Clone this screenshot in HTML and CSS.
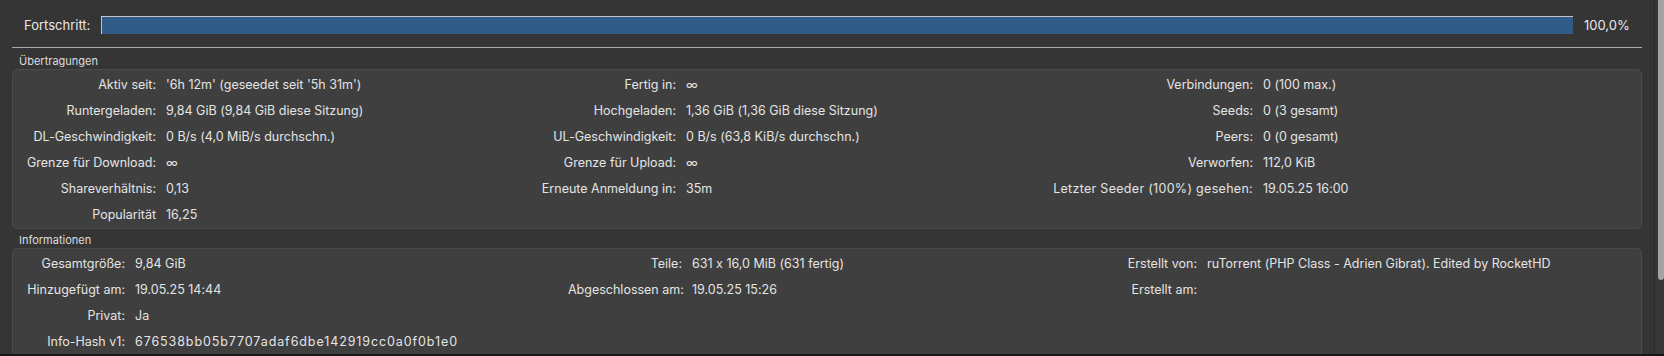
FILE: index.html
```html
<!DOCTYPE html>
<html lang="de">
<head>
<meta charset="utf-8">
<title>Torrent-Info</title>
<link rel="stylesheet" href="styles.css">
</head>
<body>
<div class="window">
  <main class="content">
    <div class="progress-row">
      <span class="plabel">Fortschritt:</span>
      <div class="bar"><div class="fill" style="width:100%"></div></div>
      <span class="pct">100,0%</span>
    </div>
    <div class="sep"></div>

    <section class="group">
      <div class="gtitle">Übertragungen</div>
      <div class="box grid-transfer">
        <div class="l">Aktiv seit:</div><div class="v">'6h 12m' (geseedet seit '5h 31m')</div>
        <div class="l">Fertig in:</div><div class="v">∞</div>
        <div class="l">Verbindungen:</div><div class="v">0 (100 max.)</div>

        <div class="l">Runtergeladen:</div><div class="v">9,84 GiB (9,84 GiB diese Sitzung)</div>
        <div class="l">Hochgeladen:</div><div class="v">1,36 GiB (1,36 GiB diese Sitzung)</div>
        <div class="l">Seeds:</div><div class="v">0 (3 gesamt)</div>

        <div class="l">DL-Geschwindigkeit:</div><div class="v">0 B/s (4,0 MiB/s durchschn.)</div>
        <div class="l">UL-Geschwindigkeit:</div><div class="v">0 B/s (63,8 KiB/s durchschn.)</div>
        <div class="l">Peers:</div><div class="v">0 (0 gesamt)</div>

        <div class="l">Grenze für Download:</div><div class="v">∞</div>
        <div class="l">Grenze für Upload:</div><div class="v">∞</div>
        <div class="l">Verworfen:</div><div class="v">112,0 KiB</div>

        <div class="l">Shareverhältnis:</div><div class="v">0,13</div>
        <div class="l">Erneute Anmeldung in:</div><div class="v">35m</div>
        <div class="l wide">Letzter Seeder (100%) gesehen:</div><div class="v">19.05.25 16:00</div>

        <div class="l">Popularität</div><div class="v">16,25</div>
        <div class="l"></div><div class="v"></div>
        <div class="l"></div><div class="v"></div>
      </div>
    </section>

    <section class="group">
      <div class="gtitle">Informationen</div>
      <div class="box grid-info">
        <div class="l">Gesamtgröße:</div><div class="v">9,84 GiB</div>
        <div class="l">Teile:</div><div class="v">631 x 16,0 MiB (631 fertig)</div>
        <div class="l">Erstellt von:</div><div class="v">ruTorrent (PHP Class - Adrien Gibrat). Edited by RocketHD</div>

        <div class="l">Hinzugefügt am:</div><div class="v">19.05.25 14:44</div>
        <div class="l">Abgeschlossen am:</div><div class="v">19.05.25 15:26</div>
        <div class="l">Erstellt am:</div><div class="v"></div>

        <div class="l">Privat:</div><div class="v">Ja</div>
        <div class="l"></div><div class="v"></div>
        <div class="l"></div><div class="v"></div>

        <div class="l">Info-Hash v1:</div><div class="v hash">676538bb05b7707adaf6dbe142919cc0a0f0b1e0</div>
        <div class="l"></div><div class="v"></div>
        <div class="l"></div><div class="v"></div>
      </div>
    </section>
  </main>
  <aside class="scroller"><div class="thumb"></div></aside>
</div>
</body>
</html>
```

FILE: styles.css
```css
* { box-sizing: border-box; }

html, body {
  margin: 0;
  padding: 0;
  background: #353535;
}

body {
  font-family: Inter, "Noto Sans", "Liberation Sans", sans-serif;
  font-feature-settings: "calt" 0;
  font-size: 12.5px;
  color: #e4e4e4;
  width: 1664px;
  height: 356px;
  overflow: hidden;
}

.window {
  display: flex;
  height: 356px;
  border-bottom: 2px solid #161616;
}

.content {
  width: 1654px;
  padding: 0 12px;
  overflow: hidden;
}

/* progress */
.progress-row {
  display: flex;
  align-items: center;
  height: 34px;
  padding-top: 15px;
}

.plabel {
  width: 89px;
  padding-left: 12px;
  font-size: 13px;
  color: #e8e8e8;
}

.bar {
  width: 1472px;
  height: 18px;
  border-top: 1px solid #c4c4c4;
  border-left: 1px solid #c4c4c4;
  background: #2d5a85;
}

.fill {
  height: 100%;
  background: #2f5c87;
}

.pct {
  padding-left: 11px;
  font-size: 13px;
  color: #e8e8e8;
}

.sep {
  height: 1px;
  margin-top: 13px;
  background: #a9a9a9;
}

/* groups */
.gtitle {
  height: 21px;
  padding-left: 7px;
  padding-top: 6px;
  font-size: 11px;
  line-height: 14px;
  color: #dedede;
}

.group + .group .gtitle {
  height: 19px;
  padding-top: 4px;
}

.box {
  background: #3f3f3f;
  border: 1px solid #4a4a4a;
  border-radius: 5px;
  display: grid;
  grid-auto-rows: 26px;
  align-items: center;
  padding-top: 1px;
}

.grid-transfer {
  height: 160px;
  grid-template-columns: 143px 384px 136px 369px 208px 1fr;
}

.grid-info {
  height: 120px;
  grid-template-columns: 112px 443px 114px 445px 70px 1fr;
}

.l {
  text-align: right;
  white-space: nowrap;
}

.wide {
  letter-spacing: 0.3px;
}

.v {
  padding-left: 10px;
  white-space: nowrap;
}

.hash {
  letter-spacing: 0.9px;
}

/* scrollbar */
.scroller {
  width: 10px;
  border-left: 1px solid #2b2b2b;
  background: #363636;
  padding-left: 3px;
}

.thumb {
  width: 6px;
  height: 280px;
  background: #a3a3a3;
  border-radius: 0 0 3px 3px;
}
```
